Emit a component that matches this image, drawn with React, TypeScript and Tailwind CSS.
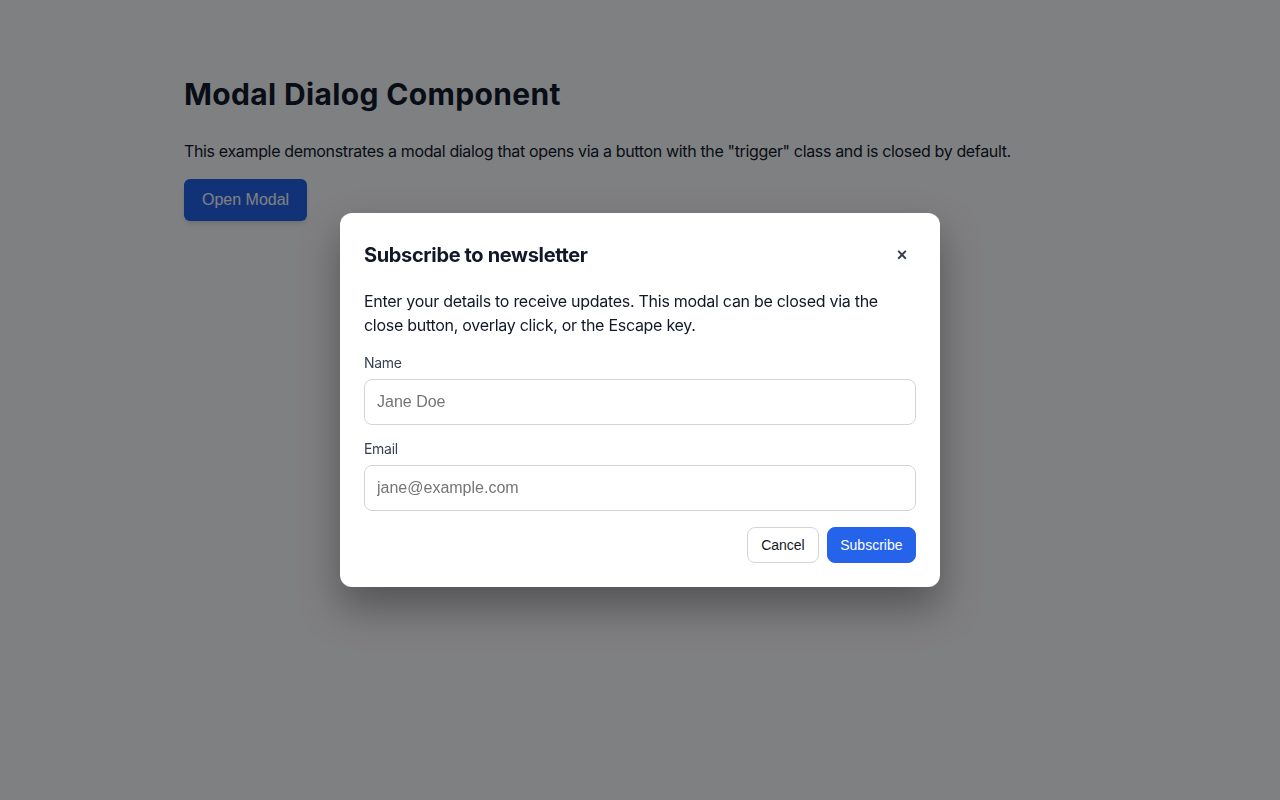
import React from "react";

export default function App() {
  return (
    <div className="relative min-h-screen bg-white font-['Inter','Noto_Sans',sans-serif] text-[#111827]">
      <div className="mx-auto max-w-[960px] px-6 pt-[76px]">
        <h1 className="text-[30px] font-bold leading-9 tracking-[0.35px] text-[#111827]">Modal Dialog Component</h1>
        <p className="mt-[27px] text-base leading-6 tracking-[-0.35px] text-[#111827]">
          This example demonstrates a modal dialog that opens via a button with the "trigger" class and is closed by default.
        </p>
        <button className="trigger mt-4 h-[42px] rounded-md bg-[#2563eb] px-[18px] font-['Liberation_Sans',Arial,sans-serif] text-base text-white shadow-md">
          Open Modal
        </button>
      </div>

      <div className="fixed inset-0 flex items-center justify-center bg-[rgba(0,1,5,0.5)]">
        <div className="w-[600px] rounded-xl bg-white p-6 shadow-[0_20px_40px_rgba(0,0,0,0.35)]">
          <div className="flex h-9 items-center justify-between">
            <h2 className="text-xl font-bold leading-7 tracking-[-0.35px] text-[#111827]">Subscribe to newsletter</h2>
            <button className="flex h-9 w-7 items-center justify-center font-['Liberation_Sans',Arial,sans-serif] text-lg font-bold leading-none text-[#374151]">
              ×
            </button>
          </div>
          <p className="mt-4 text-base leading-6 tracking-[-0.28px] text-[#111827]">
            Enter your details to receive updates. This modal can be closed via the close button, overlay click, or the Escape key.
          </p>
          <label className="mt-4 block text-sm leading-5 tracking-[-0.3px] text-[#374151]">Name</label>
          <input
            type="text"
            placeholder="Jane Doe"
            className="mt-1.5 block h-[46px] w-full rounded-lg border border-[#d1d5db] px-3 font-['Liberation_Sans',Arial,sans-serif] text-base text-[#111827] placeholder:text-[#757575] outline-none"
          />
          <label className="mt-3.5 block text-sm leading-5 tracking-[-0.3px] text-[#374151]">Email</label>
          <input
            type="email"
            placeholder="jane@example.com"
            className="mt-1.5 block h-[46px] w-full rounded-lg border border-[#d1d5db] px-3 font-['Liberation_Sans',Arial,sans-serif] text-base text-[#111827] placeholder:text-[#757575] outline-none"
          />
          <div className="mt-4 flex justify-end gap-2">
            <button className="h-9 rounded-lg border border-[#d1d5db] bg-white px-[13px] font-['Liberation_Sans',Arial,sans-serif] text-sm text-[#111827]">
              Cancel
            </button>
            <button className="h-9 rounded-lg border border-[#2563eb] bg-[#2563eb] px-[12.5px] font-['Liberation_Sans',Arial,sans-serif] text-sm text-white">
              Subscribe
            </button>
          </div>
        </div>
      </div>
    </div>
  );
}
